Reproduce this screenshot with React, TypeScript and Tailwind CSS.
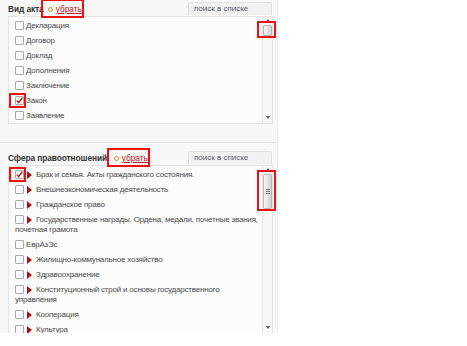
import React from "react";

type Item = { label: string; arrow?: boolean; checked?: boolean; marked?: boolean };

const acts: Item[] = [
    { label: "Декларация" },
    { label: "Договор" },
    { label: "Доклад" },
    { label: "Дополнения" },
    { label: "Заключение" },
    { label: "Закон", checked: true, marked: true },
    { label: "Заявление" },
];

const spheres: Item[] = [
    { label: "Брак и семья. Акты гражданского состояния.", arrow: true, checked: true, marked: true },
    { label: "Внешнеэкономическая деятельность", arrow: true },
    { label: "Гражданское право", arrow: true },
    { label: "Государственные награды. Ордена, медали, почетные звания, почетная грамота", arrow: true },
    { label: "ЕврАзЭс" },
    { label: "Жилищно-коммунальное хозяйство", arrow: true },
    { label: "Здравоохранение", arrow: true },
    { label: "Конституционный строй и основы государственного управления", arrow: true },
    { label: "Кооперация", arrow: true },
    { label: "Культура", arrow: true },
];

function Checkbox({ checked, marked }: { checked?: boolean; marked?: boolean }) {
    return (
        <span className="relative inline-block w-[9px] h-[9px] mr-[2px] mt-[0.5px] align-top border border-[#a9a9a9] rounded-[1px] bg-white">
            {checked && (
                <svg viewBox="0 0 9 9" className="absolute left-[-1px] top-[-1px] w-[9px] h-[9px]">
                    <path d="M1.8 4.6 L3.6 6.6 L7.4 1.6" fill="none" stroke="#c0121b" strokeWidth="1.4" />
                </svg>
            )}
            {marked && (
                <span className="absolute left-[-7px] top-[-4px] w-[17px] h-[15px] border-2 border-[#ee1111]" />
            )}
        </span>
    );
}

function Row({ item }: { item: Item }) {
    return (
        <div className="py-[2.5px] leading-[10px] text-[8px] tracking-[-0.2px] text-[#4a4a4a]">
            <Checkbox checked={item.checked} marked={item.marked} />
            {item.arrow && (
                <span className="inline-block w-0 h-0 ml-[1px] mr-[4px] mt-[1px] align-top border-l-[5px] border-l-[#a0141a] border-y-[4px] border-y-transparent" />
            )}
            {item.label}
        </div>
    );
}

function Scrollbar({ thumbTop, thumbHeight, grip }: { thumbTop: number; thumbHeight: number; grip?: boolean }) {
    return (
        <div className="w-[10px] border-l border-[#e8e8e8] bg-[#f7f7f7] flex flex-col items-center">
            <span className="mt-[2px] w-0 h-0 border-x-[2px] border-x-transparent border-b-[3px] border-b-[#555]" />
            <div
                className="relative w-[9px] rounded-[1px] border border-[#b8b8b8] bg-gradient-to-r from-[#f4f4f4] via-[#e4e4e4] to-[#cfcfcf] flex flex-col items-center justify-center gap-[1px]"
                style={{ marginTop: thumbTop, height: thumbHeight }}
            >
                {grip && (
                    <>
                        <span className="w-[4px] h-px bg-[#777]" />
                        <span className="w-[4px] h-px bg-[#777]" />
                        <span className="w-[4px] h-px bg-[#777]" />
                    </>
                )}
                <span className="absolute left-[-7px] top-[-5px] border-2 border-[#ee1111]" style={{ width: 19, height: thumbHeight + 6 }} />
            </div>
            <div className="flex-1" />
            <span className="mb-[4px] w-0 h-0 border-x-[2px] border-x-transparent border-t-[3px] border-t-[#555]" />
        </div>
    );
}

function Header({ title, height, titleTop, searchTop }: { title: string; height: number; titleTop: number; searchTop: number }) {
    return (
        <div className="flex items-start pl-[8px]" style={{ height }}>
            <div className="flex items-center leading-[12px]" style={{ marginTop: titleTop }}>
                <span className="font-bold text-[8.4px] tracking-[-0.1px] text-[#333]">{title}</span>
                <span className="relative ml-[4px] flex items-center">
                    <span className="w-[5px] h-[5px] rounded-full border-[1.5px] border-[#e8821e] mr-[3px]" />
                    <span className="text-[8.3px] text-[#c4161c] underline">убрать</span>
                    <span className="absolute left-[-7px] top-[-4px] w-[43px] h-[19px] border-2 border-[#ee1111]" />
                </span>
            </div>
            <div
                className="ml-auto mr-[5px] w-[84px] h-[13px] rounded-t-[3px] border border-b-0 border-[#e2e2e2] bg-[#f1f1f1] pl-[5px] text-[8px] leading-[12px] text-[#5c5c6c]"
                style={{ marginTop: searchTop }}
            >
                поиск в списке
            </div>
        </div>
    );
}

export default function App() {
    return (
        <div className="w-[467px] h-[346px] bg-white" style={{ fontFamily: '"Liberation Sans", Arial, sans-serif' }}>
            <div className="w-[278px] bg-[#f8f8f8] border-r border-[#ececec]">
                <Header title="Вид акта" height={16} titleTop={3} searchTop={2} />
                <div className="ml-[8px] w-[265px] h-[108px] flex border border-[#e4e4e4] bg-[#fcfcfc]">
                    <div className="flex-1 pl-[6px] pt-[1px] overflow-hidden">
                        {acts.map((a) => (
                            <Row key={a.label} item={a} />
                        ))}
                    </div>
                    <Scrollbar thumbTop={3} thumbHeight={11} />
                </div>
                <div className="h-[19px] border-b border-[#e2e2e2]" />
                <Header title="Сфера правоотношений:" height={22} titleTop={9} searchTop={8} />
                <div className="ml-[8px] w-[265px] h-[168px] flex border border-[#e4e4e4] border-b-0 bg-[#fcfcfc]">
                    <div className="flex-1 pl-[6px] pt-[1px] overflow-hidden">
                        {spheres.map((s) => (
                            <Row key={s.label} item={s} />
                        ))}
                    </div>
                    <Scrollbar thumbTop={3} thumbHeight={35} grip />
                </div>
            </div>
        </div>
    );
}
